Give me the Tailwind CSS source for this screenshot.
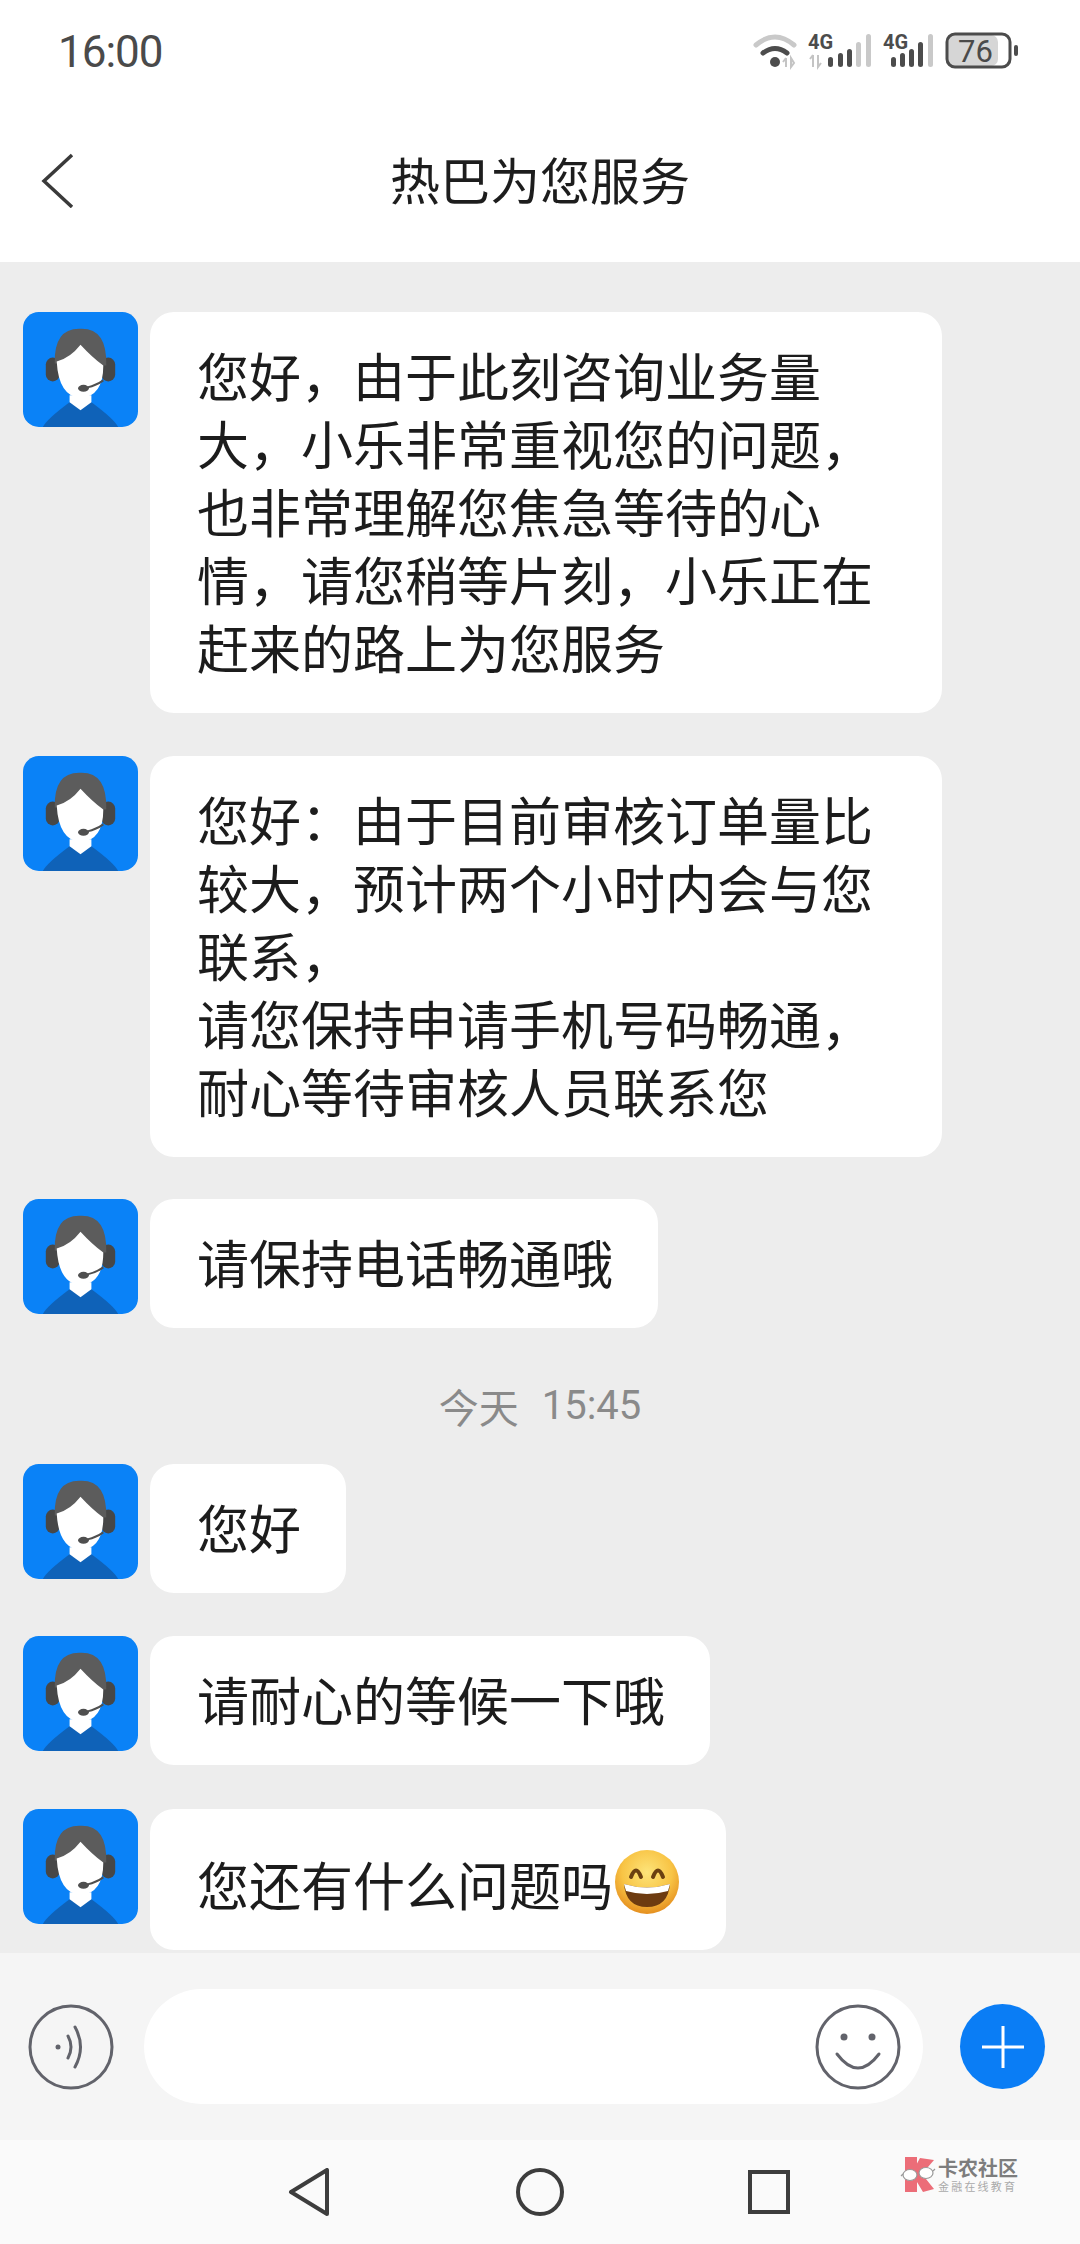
<!DOCTYPE html>
<html lang="zh-CN">
<head>
  <meta charset="UTF-8" />
  <meta name="viewport" content="width=device-width, initial-scale=1" />
  <title>热巴为您服务</title>
  <script src="https://cdn.jsdelivr.net/npm/@tailwindcss/browser@4"></script>
</head>
<body class="w-[1080px] h-[2244px] overflow-hidden bg-white font-['Noto_Sans_CJK_SC',sans-serif] text-[#1c1c1c]">

  <!-- 状态栏 -->
  <div class="h-[100px] flex justify-between items-start">
    <span class="ml-[58px] mt-[24px] text-[44px] leading-[56px] text-[#4a4a4a] font-['Roboto',sans-serif] tracking-[-1px]">16:00</span>
    <svg class="mr-[60px] mt-[28px]" width="270" height="44" viewBox="750 28 270 44">
      <path d="M756 45 Q775 29 794 45" fill="none" stroke="#c9c9c9" stroke-width="5" stroke-linecap="round"/>
      <path d="M763 53 Q775 44 787 53" fill="none" stroke="#4c4c4c" stroke-width="5" stroke-linecap="round"/>
      <circle cx="775" cy="62" r="5" fill="#4c4c4c"/>
      <path d="M786 58v9M783 62l3-4M791 58v9l3-4z" fill="none" stroke="#c4c4c4" stroke-width="2"/>
      <text x="808" y="49" font-family="Roboto" font-weight="700" font-size="20" fill="#4c4c4c">4G</text>
      <path d="M813 55v12M810 59l3-4M818 55v12l3-4" fill="none" stroke="#c4c4c4" stroke-width="2"/>
      <rect x="828" y="57" width="5" height="10" rx="2.5" fill="#4c4c4c"/>
      <rect x="838" y="53" width="5" height="14" rx="2.5" fill="#4c4c4c"/>
      <rect x="847" y="49" width="5" height="18" rx="2.5" fill="#4c4c4c"/>
      <rect x="856" y="42" width="5" height="25" rx="2.5" fill="#c9c9c9"/>
      <rect x="866" y="34" width="5" height="33" rx="2.5" fill="#c9c9c9"/>
      <text x="883" y="49" font-family="Roboto" font-weight="700" font-size="20" fill="#4c4c4c">4G</text>
      <rect x="891" y="57" width="5" height="10" rx="2.5" fill="#4c4c4c"/>
      <rect x="900" y="53" width="5" height="14" rx="2.5" fill="#4c4c4c"/>
      <rect x="909" y="49" width="5" height="18" rx="2.5" fill="#4c4c4c"/>
      <rect x="918" y="42" width="5" height="25" rx="2.5" fill="#4c4c4c"/>
      <rect x="928" y="34" width="5" height="33" rx="2.5" fill="#c9c9c9"/>
      <rect x="948" y="35" width="50" height="31" rx="7" fill="#d6d6d6"/>
      <rect x="947" y="34" width="63" height="33" rx="8" fill="none" stroke="#4c4c4c" stroke-width="3"/>
      <rect x="1014" y="45" width="4" height="11" rx="2" fill="#4c4c4c"/>
      <text x="958" y="62" font-family="Roboto" font-size="31" fill="#4a4a4a">76</text>
    </svg>
  </div>

  <!-- 标题栏 -->
  <header class="relative h-[162px] flex justify-center pt-[48px]">
    <svg class="absolute left-[40px] top-[52px]" width="36" height="56" viewBox="0 0 36 56">
      <path d="M32 3 L4 29 L32 55" fill="none" stroke="#3a3a3a" stroke-width="3.5"/>
    </svg>
    <h1 class="text-[50px] leading-[60px] font-normal text-[#1d1d1d]">热巴为您服务</h1>
  </header>

  <!-- 聊天内容 -->
  <main class="h-[1691px] overflow-hidden bg-[#ededed] pt-[50px] pl-[23px]">

    <div class="flex items-start gap-[12px]">
      <svg class="shrink-0" width="115" height="115" viewBox="0 0 116 116"><use href="#kefu"/></svg>
      <p class="w-[792px] bg-white rounded-[24px] px-[47px] pt-[29px] pb-[32px] text-[52px] leading-[68px]">您好，由于此刻咨询业务量<br>大，小乐非常重视您的问题，<br>也非常理解您焦急等待的心<br>情，请您稍等片刻，小乐正在<br>赶来的路上为您服务</p>
    </div>

    <div class="flex items-start gap-[12px] mt-[43px]">
      <svg class="shrink-0" width="115" height="115" viewBox="0 0 116 116"><use href="#kefu"/></svg>
      <p class="w-[792px] bg-white rounded-[24px] px-[47px] pt-[29px] pb-[32px] text-[52px] leading-[68px]">您好：由于目前审核订单量比<br>较大，预计两个小时内会与您<br>联系，<br>请您保持申请手机号码畅通，<br>耐心等待审核人员联系您</p>
    </div>

    <div class="flex items-start gap-[12px] mt-[42px]">
      <svg class="shrink-0" width="115" height="115" viewBox="0 0 116 116"><use href="#kefu"/></svg>
      <p class="bg-white rounded-[24px] pl-[47px] pr-[45px] pt-[29px] pb-[32px] text-[52px] leading-[68px]">请保持电话畅通哦</p>
    </div>

    <div class="-ml-[23px] mt-[56px] mb-[36px] flex justify-center gap-[23px] text-[40px] leading-[44px] text-[#8a8a8a]">
      <span>今天</span><span class="font-['Roboto',sans-serif]">15:45</span>
    </div>

    <div class="flex items-start gap-[12px]">
      <svg class="shrink-0" width="115" height="115" viewBox="0 0 116 116"><use href="#kefu"/></svg>
      <p class="bg-white rounded-[24px] pl-[47px] pr-[45px] pt-[29px] pb-[32px] text-[52px] leading-[68px]">您好</p>
    </div>

    <div class="flex items-start gap-[12px] mt-[43px]">
      <svg class="shrink-0" width="115" height="115" viewBox="0 0 116 116"><use href="#kefu"/></svg>
      <p class="bg-white rounded-[24px] pl-[47px] pr-[45px] pt-[29px] pb-[32px] text-[52px] leading-[68px]">请耐心的等候一下哦</p>
    </div>

    <div class="flex items-start gap-[12px] mt-[44px]">
      <svg class="shrink-0" width="115" height="115" viewBox="0 0 116 116"><use href="#kefu"/></svg>
      <div class="flex items-center h-[141px] bg-white rounded-[24px] pl-[47px] pr-[45px] pt-[9px] text-[52px] leading-[68px]">
        <span>您还有什么问题吗</span>
        <svg class="-mt-[5px]" width="68" height="68" viewBox="0 0 68 68">
          <defs>
            <radialGradient id="smile" cx="50%" cy="35%" r="65%">
              <stop offset="0" stop-color="#fde47a"/>
              <stop offset="0.6" stop-color="#f8c445"/>
              <stop offset="1" stop-color="#e58f1f"/>
            </radialGradient>
          </defs>
          <circle cx="34" cy="34" r="32" fill="url(#smile)"/>
          <path d="M18 29 Q23 16 28 29M40 29 Q45 16 50 29" fill="none" stroke="#6b4011" stroke-width="4" stroke-linecap="round"/>
          <path d="M11 36 Q34 43 57 36 Q55 59 34 59 Q13 59 11 36z" fill="#6d3b10"/>
          <path d="M11 36 Q34 43 57 36 L55 43 Q34 49 13 43z" fill="#fff"/>
        </svg>
      </div>
    </div>
  </main>

  <!-- 输入栏 -->
  <div class="h-[187px] bg-[#f5f5f5] flex items-center pl-[28px]">
    <svg class="shrink-0" width="86" height="86" viewBox="0 0 86 86" fill="none" stroke="#62636b" stroke-width="3">
      <circle cx="43" cy="43" r="41"/>
      <circle cx="30" cy="43" r="2.5" fill="#62636b" stroke="none"/>
      <path d="M40 32 Q46 43 40 54M47 23 Q58 43 47 63" stroke-linecap="round"/>
    </svg>
    <div class="ml-[30px] w-[779px] h-[115px] bg-white rounded-full flex items-center justify-end pr-[22px]">
      <svg width="86" height="86" viewBox="0 0 86 86" fill="none" stroke="#62636b" stroke-width="3">
        <circle cx="43" cy="43" r="41"/>
        <circle cx="29" cy="33" r="3.5" fill="#62636b" stroke="none"/>
        <circle cx="57" cy="33" r="3.5" fill="#62636b" stroke="none"/>
        <path d="M22 50 Q43 78 64 50" stroke-linecap="round"/>
      </svg>
    </div>
    <div class="ml-[37px] w-[85px] h-[85px] rounded-full bg-[#0a7df5] flex items-center justify-center">
      <svg width="44" height="44" viewBox="0 0 44 44" stroke="#fff" stroke-width="3"><path d="M22 1v42M1 22h42"/></svg>
    </div>
  </div>

  <!-- 导航栏 -->
  <nav class="relative h-[104px] bg-[#fafafa] flex items-start pt-[28px]">
    <svg class="ml-[288px]" width="42" height="48" viewBox="0 0 42 48" fill="none" stroke="#3d3d3d" stroke-width="4" stroke-linejoin="round"><path d="M39 2 V46 L3 24z"/></svg>
    <svg class="ml-[186px]" width="48" height="48" viewBox="0 0 48 48" fill="none" stroke="#3d3d3d" stroke-width="4"><circle cx="24" cy="24" r="22"/></svg>
    <svg class="ml-[184px] mt-[1px]" width="42" height="46" viewBox="0 0 42 46" fill="none" stroke="#3d3d3d" stroke-width="4"><path d="M2 3h38v40H2z"/></svg>

    <!-- 水印 -->
    <div class="absolute left-[900px] top-[17px] flex items-start">
      <svg width="36" height="36" viewBox="0 0 36 36">
        <path d="M5 0h12v35H5zM20 1l14 2-12 14 12 15-11 3-9-15V12z" fill="#ec6d78"/>
        <ellipse cx="10" cy="18" rx="7" ry="5.5" fill="#fff" stroke="#999" stroke-width="1.2"/>
        <ellipse cx="26" cy="16" rx="7" ry="5.5" fill="#fff" stroke="#999" stroke-width="1.2"/>
        <path d="M3 17 L1 19M33 14 L35 12" stroke="#999" stroke-width="1.2"/>
      </svg>
      <div class="ml-[2px] flex flex-col text-[#7d7d7d]">
        <span class="text-[20px] leading-[22px] font-bold">卡农社区</span>
        <span class="mt-[1px] text-[11px] leading-[13px] tracking-[2.2px] text-[#aaa] whitespace-nowrap">金融在线教育</span>
      </div>
    </div>
  </nav>

  <!-- 客服头像 -->
  <svg class="hidden" width="0" height="0">
    <defs>
      <g id="kefu">
        <rect width="116" height="116" rx="16" fill="#0a82f7"/>
        <path d="M20 116 Q24 108 47 91 L69 91 Q92 108 96 116z" fill="#0f62b8"/>
        <path d="M47 84 H69 V91 L58 99 L47 91z" fill="#fff"/>
        <rect x="23" y="46" width="14" height="24" rx="7" fill="#474747"/>
        <rect x="79" y="46" width="14" height="24" rx="7" fill="#474747"/>
        <path d="M32 52 Q31 16 58 17 Q85 16 84 54z" fill="#5c5c5c"/>
        <path d="M34 50 Q48 46 58 33 Q70 46 81 54 Q81 85 58 87 Q36 85 34 50z" fill="#fff"/>
        <path d="M65 76 Q74 74 81 69" fill="none" stroke="#4f4f4f" stroke-width="2"/>
        <ellipse cx="61" cy="77" rx="5.5" ry="3.5" fill="#4f4f4f"/>
      </g>
    </defs>
  </svg>

</body>
</html>
